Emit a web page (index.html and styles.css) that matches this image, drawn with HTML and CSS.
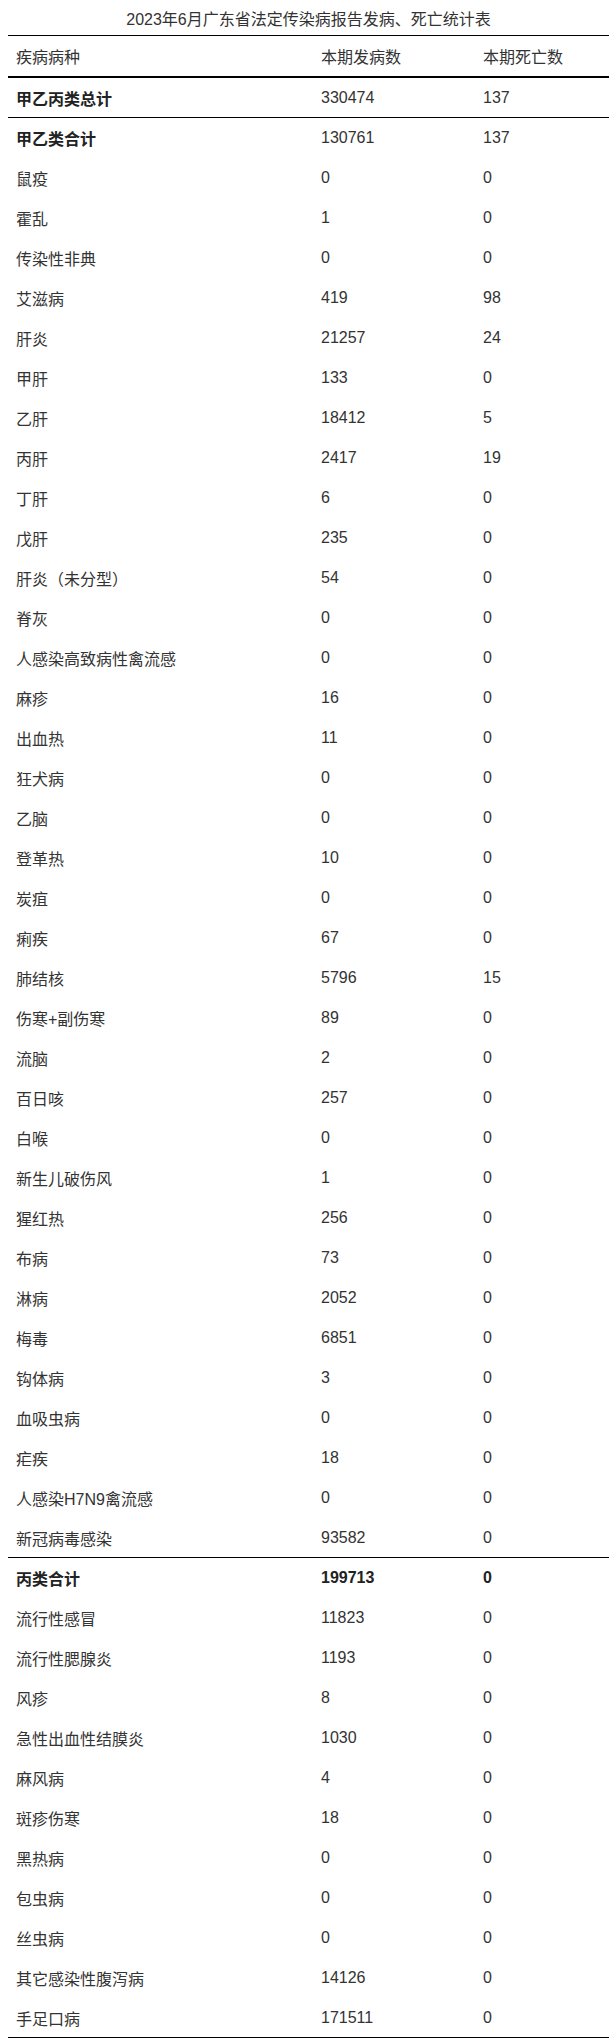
FILE: index.html
```html
<!DOCTYPE html>
<html lang="zh-CN">
<head>
<meta charset="utf-8">
<title>2023年6月广东省法定传染病报告发病、死亡统计表</title>
<link rel="stylesheet" href="styles.css">
</head>
<body>
<table class="stats">
  <caption class="stats-title">2023年6月广东省法定传染病报告发病、死亡统计表</caption>
  <thead>
    <tr class="head-row"><th>疾病病种</th><th>本期发病数</th><th>本期死亡数</th></tr>
  </thead>
  <tbody>
    <tr class="row group-title sep"><td>甲乙丙类总计</td><td>330474</td><td>137</td></tr>
    <tr class="row group-title"><td>甲乙类合计</td><td>130761</td><td>137</td></tr>
    <tr class="row"><td>鼠疫</td><td>0</td><td>0</td></tr>
    <tr class="row"><td>霍乱</td><td>1</td><td>0</td></tr>
    <tr class="row"><td>传染性非典</td><td>0</td><td>0</td></tr>
    <tr class="row"><td>艾滋病</td><td>419</td><td>98</td></tr>
    <tr class="row"><td>肝炎</td><td>21257</td><td>24</td></tr>
    <tr class="row"><td>甲肝</td><td>133</td><td>0</td></tr>
    <tr class="row"><td>乙肝</td><td>18412</td><td>5</td></tr>
    <tr class="row"><td>丙肝</td><td>2417</td><td>19</td></tr>
    <tr class="row"><td>丁肝</td><td>6</td><td>0</td></tr>
    <tr class="row"><td>戊肝</td><td>235</td><td>0</td></tr>
    <tr class="row"><td>肝炎（未分型）</td><td>54</td><td>0</td></tr>
    <tr class="row"><td>脊灰</td><td>0</td><td>0</td></tr>
    <tr class="row"><td>人感染高致病性禽流感</td><td>0</td><td>0</td></tr>
    <tr class="row"><td>麻疹</td><td>16</td><td>0</td></tr>
    <tr class="row"><td>出血热</td><td>11</td><td>0</td></tr>
    <tr class="row"><td>狂犬病</td><td>0</td><td>0</td></tr>
    <tr class="row"><td>乙脑</td><td>0</td><td>0</td></tr>
    <tr class="row"><td>登革热</td><td>10</td><td>0</td></tr>
    <tr class="row"><td>炭疽</td><td>0</td><td>0</td></tr>
    <tr class="row"><td>痢疾</td><td>67</td><td>0</td></tr>
    <tr class="row"><td>肺结核</td><td>5796</td><td>15</td></tr>
    <tr class="row"><td>伤寒+副伤寒</td><td>89</td><td>0</td></tr>
    <tr class="row"><td>流脑</td><td>2</td><td>0</td></tr>
    <tr class="row"><td>百日咳</td><td>257</td><td>0</td></tr>
    <tr class="row"><td>白喉</td><td>0</td><td>0</td></tr>
    <tr class="row"><td>新生儿破伤风</td><td>1</td><td>0</td></tr>
    <tr class="row"><td>猩红热</td><td>256</td><td>0</td></tr>
    <tr class="row"><td>布病</td><td>73</td><td>0</td></tr>
    <tr class="row"><td>淋病</td><td>2052</td><td>0</td></tr>
    <tr class="row"><td>梅毒</td><td>6851</td><td>0</td></tr>
    <tr class="row"><td>钩体病</td><td>3</td><td>0</td></tr>
    <tr class="row"><td>血吸虫病</td><td>0</td><td>0</td></tr>
    <tr class="row"><td>疟疾</td><td>18</td><td>0</td></tr>
    <tr class="row"><td>人感染H7N9禽流感</td><td>0</td><td>0</td></tr>
    <tr class="row sep"><td>新冠病毒感染</td><td>93582</td><td>0</td></tr>
    <tr class="row bold"><td>丙类合计</td><td>199713</td><td>0</td></tr>
    <tr class="row"><td>流行性感冒</td><td>11823</td><td>0</td></tr>
    <tr class="row"><td>流行性腮腺炎</td><td>1193</td><td>0</td></tr>
    <tr class="row"><td>风疹</td><td>8</td><td>0</td></tr>
    <tr class="row"><td>急性出血性结膜炎</td><td>1030</td><td>0</td></tr>
    <tr class="row"><td>麻风病</td><td>4</td><td>0</td></tr>
    <tr class="row"><td>斑疹伤寒</td><td>18</td><td>0</td></tr>
    <tr class="row"><td>黑热病</td><td>0</td><td>0</td></tr>
    <tr class="row"><td>包虫病</td><td>0</td><td>0</td></tr>
    <tr class="row"><td>丝虫病</td><td>0</td><td>0</td></tr>
    <tr class="row"><td>其它感染性腹泻病</td><td>14126</td><td>0</td></tr>
    <tr class="row sep"><td>手足口病</td><td>171511</td><td>0</td></tr>
  </tbody>
</table>
</body>
</html>
```

FILE: styles.css
```css
html, body {
  background: #ffffff;
}
body {
  margin: 8px 0 0 8px;
  font-family: "Liberation Sans", Arial, "Noto Sans CJK SC", sans-serif;
  font-size: 16px;
  color: #333333;
}
.stats {
  width: 601px;
  border-collapse: collapse;
  border-spacing: 0;
  table-layout: fixed;
}
.stats-title {
  height: 27px;
  line-height: 24px;
  text-align: center;
  font-weight: normal;
  padding: 0;
}
.stats th,
.stats td {
  padding: 0 8px;
  text-align: left;
  font-weight: normal;
  white-space: nowrap;
  vertical-align: middle;
}
.stats th:nth-child(1) { width: 289px; }
.stats th:nth-child(2) { width: 146px; }
.head-row th {
  height: 40px;
  border-top: 1px solid #000;
  border-bottom: 2px solid #000;
}
.row td {
  height: 40px;
}
.row.sep td {
  height: 39px;
  border-bottom: 1px solid #000;
}
.bold td,
.group-title td:first-child {
  font-weight: bold;
  color: #222222;
}
```
